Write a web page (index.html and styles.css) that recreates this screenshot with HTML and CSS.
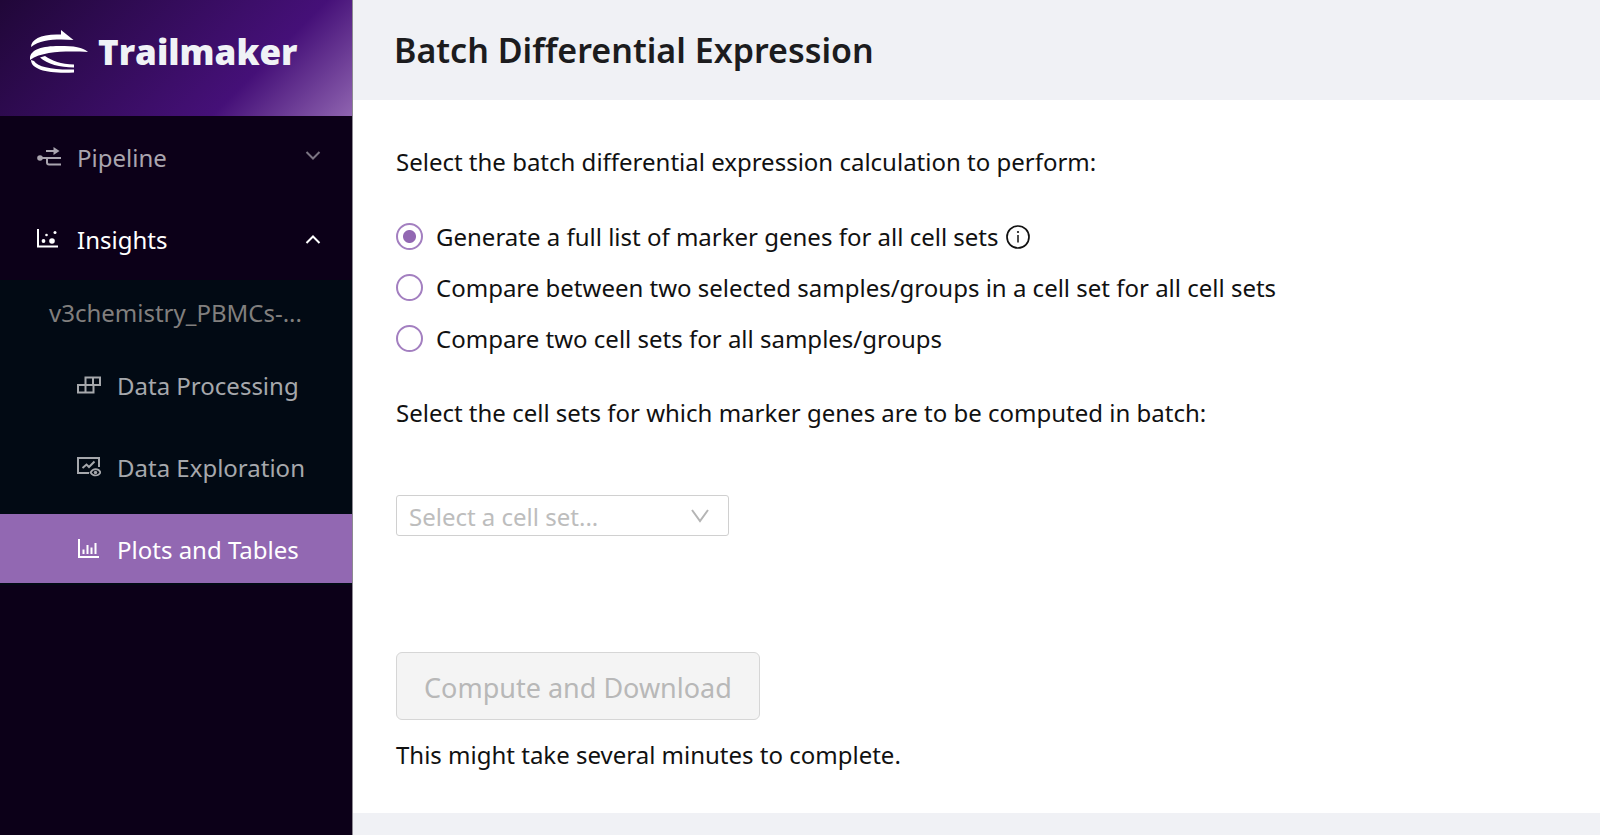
FILE: index.html
```html
<!DOCTYPE html>
<html lang="en">
<head>
<meta charset="utf-8">
<meta name="viewport" content="width=device-width, initial-scale=1">
<title>Batch Differential Expression - Trailmaker</title>
<link rel="stylesheet" href="styles.css">
</head>
<body>
<div class="app">
  <aside class="sidebar">
    <a class="brand" href="#">
      <svg class="brand-mark" viewBox="0 0 58 44" width="58" height="44" aria-hidden="true">
        <path d="M1 17C1 9 12 3.500 31 4.500V0L43.500 10C28 9 11 9 1 17Z"/>
        <path d="M0 30C-1 20 11 16 29 16C45 16 52 17 58 22C42 21.500 14 20 0 30Z"/>
        <path d="M10 27.500L15 26C22 31 31 34 44 34.500V37.500C30 37.500 17 34 10 27.500Z"/>
        <path d="M1 30L4 31C8 37 22 40 44 39.500V42.500C20 44 1 40 1 30Z"/>
      </svg>
      <span class="brand-name">Trailmaker</span>
    </a>
    <nav class="menu" aria-label="Main">
      <button class="item" type="button" aria-expanded="false">
        <svg class="icon" viewBox="0 0 24 24" width="24" height="24" aria-hidden="true">
          <path d="M2 12H24M9 5H18M10 12V16.500Q10 18.500 12 18.500H24" fill="none" stroke="currentColor" stroke-width="2"/>
          <path d="M16.500 1L22.500 5 16.500 9Z"/><circle cx="3" cy="12" r="2.800"/>
        </svg>
        <span class="label">Pipeline</span>
        <svg class="arrow" viewBox="0 0 16 16" width="16" height="16" aria-hidden="true"><path d="M1.500 2L8 8.500 14.500 2"/></svg>
      </button>
      <button class="item open" type="button" aria-expanded="true">
        <svg class="icon" viewBox="0 0 24 24" width="24" height="24" aria-hidden="true">
          <path d="M1 1V18.500H21" fill="none" stroke="currentColor" stroke-width="2"/>
          <circle cx="6.500" cy="13" r="1.900"/><circle cx="9.500" cy="7" r="1.300"/><circle cx="15" cy="13" r="2.800"/><circle cx="18" cy="4.500" r="1.500"/>
        </svg>
        <span class="label">Insights</span>
        <svg class="arrow" viewBox="0 0 16 16" width="16" height="16" aria-hidden="true"><path d="M1.500 11L8 4.500 14.500 11"/></svg>
      </button>
      <div class="submenu">
        <div class="group-title">v3chemistry_PBMCs-...</div>
        <a class="item" href="#">
          <svg class="icon" viewBox="0 0 24 24" width="24" height="24" aria-hidden="true">
            <path d="M1 11H16.500V18.500H1ZM8.500 3.500H23V11H8.500ZM8.500 11V18.500M16 3.500V11" fill="none" stroke="currentColor" stroke-width="2"/>
          </svg>
          <span class="label">Data Processing</span>
        </a>
        <a class="item" href="#">
          <svg class="icon" viewBox="0 0 24 24" width="24" height="24" aria-hidden="true">
            <path d="M12 17H1V2H22V11M5.500 12L9.500 8.500 12 11 17.500 5.500" fill="none" stroke="currentColor" stroke-width="2"/>
            <path d="M13.500 16.500C16 12 21.500 12 23.500 16.500C21.500 20.500 16 20.500 13.500 16.500Z" fill="none" stroke="currentColor" stroke-width="1.700"/><circle cx="18.500" cy="16.500" r="1.700"/>
          </svg>
          <span class="label">Data Exploration</span>
        </a>
        <a class="item selected" href="#" aria-current="page">
          <svg class="icon" viewBox="0 0 24 24" width="24" height="24" aria-hidden="true">
            <path d="M2 1V19H22M6.500 16V11.500M10.500 16V7M14.500 16V9.500M18.500 16V5" fill="none" stroke="currentColor" stroke-width="2"/>
          </svg>
          <span class="label">Plots and Tables</span>
        </a>
      </div>
    </nav>
  </aside>
  <main class="main">
    <header class="page-head"><h1>Batch Differential Expression</h1></header>
    <form class="panel">
      <fieldset class="choices">
        <legend>Select the batch differential expression calculation to perform:</legend>
        <label class="choice"><input type="radio" name="calc" checked><span>Generate a full list of marker genes for all cell sets</span>
          <svg class="info" viewBox="0 0 24 24" width="24" height="24" aria-hidden="true"><circle cx="12" cy="12" r="11" fill="none" stroke="currentColor" stroke-width="1.700"/><path d="M12 10V17.500" fill="none" stroke="currentColor" stroke-width="1.500"/><circle cx="12" cy="7" r="1.100"/></svg>
        </label>
        <label class="choice"><input type="radio" name="calc"><span>Compare between two selected samples/groups in a cell set for all cell sets</span></label>
        <label class="choice"><input type="radio" name="calc"><span>Compare two cell sets for all samples/groups</span></label>
      </fieldset>
      <label class="prompt" for="cellset">Select the cell sets for which marker genes are to be computed in batch:</label>
      <div class="select">
        <select id="cellset"><option>Select a cell set...</option></select>
        <svg class="caret" viewBox="0 0 18 14" width="18" height="14" aria-hidden="true"><path d="M1 1L9 12 17 1"/></svg>
      </div>
      <button class="compute" type="button" disabled>Compute and Download</button>
      <p class="note">This might take several minutes to complete.</p>
    </form>
  </main>
</div>
</body>
</html>
```
FILE: styles.css
```css
* { box-sizing: border-box; }
body {
  margin: 0;
  font-family: "Noto Sans", "Open Sans", sans-serif;
  font-size: 24px;
  line-height: 36px;
  color: #111;
  background: #f0f1f5;
}
button, select { font: inherit; }
svg { fill: currentColor; flex: none; }

.app { display: flex; min-height: 100vh; }

.sidebar {
  flex: none;
  width: 353px;
  background: #0c0018;
  border-right: 1px solid #8d8a92;
}
.brand {
  display: flex;
  align-items: center;
  gap: 10px;
  height: 116px;
  padding: 0 30px 12px;
  color: #f0f2f6;
  text-decoration: none;
  background: linear-gradient(135deg, #200738 0%, #451078 70%, #8f64b0 100%);
}
.brand-mark { fill: #fff; }
.brand-name { font-family: "Open Sans", sans-serif; font-size: 35px; font-weight: 800; }

.menu { padding-top: 6px; }
.item {
  display: flex;
  align-items: center;
  gap: 16px;
  width: 100%;
  height: 69px;
  margin-bottom: 13px;
  padding: 2px 31px 0 37px;
  border: 0;
  background: none;
  color: #aaa5af;
  text-align: left;
  text-decoration: none;
  cursor: pointer;
}
.item .label { flex: 1; }
.item.open { margin-bottom: 7px; color: #fff; }
.arrow { fill: none; stroke: currentColor; stroke-width: 2; opacity: 0.7; }
.open .arrow { opacity: 1; }
.submenu { background: #020a14; padding-bottom: 2px; }
.submenu .item { padding-left: 77px; color: #a6a8ac; }
.submenu .item.selected { margin: 0; background: #9268b2; color: #fff; }
.group-title { padding: 15px 0 19px 49px; color: #817f7e; }

.main { flex: 1; min-width: 0; }
.page-head { padding: 28px 41px; }
h1 { margin: 0; font-size: 34px; line-height: 44px; font-weight: 600; color: #1c1c1e; }

.panel { padding: 44px 43px 40px; background: #fff; }
.choices { margin: 0 0 31px; padding: 0; border: 0; }
legend { margin-bottom: 31px; padding: 0; }
.choice { display: flex; align-items: center; height: 51px; }
.choice input {
  appearance: none;
  flex: none;
  width: 27px;
  height: 27px;
  margin: 0 13px 0 0;
  border: 2px solid #a37fc0;
  border-radius: 50%;
}
.choice input:checked { background: radial-gradient(circle, #9268b2 0 6px, transparent 7px); }
.info { margin-left: 7px; }
.prompt { display: block; }

.select { position: relative; width: 333px; margin-top: 64px; }
.select select {
  display: block;
  appearance: none;
  width: 100%;
  height: 41px;
  padding: 2px 48px 0 12px;
  border: 1px solid #d0d0d0;
  border-radius: 3px;
  background: #fff;
  color: #bdbdbd;
}
.caret {
  position: absolute;
  top: 14px;
  right: 20px;
  fill: none;
  stroke: #b5b5b5;
  stroke-width: 2;
  pointer-events: none;
}
.compute {
  display: block;
  margin: 116px 0 17px;
  padding: 16px 27px 12px;
  border: 1px solid #d6d6d6;
  border-radius: 6px;
  background: #f4f4f4;
  color: #b8b8b8;
  font-size: 27px;
  line-height: 38px;
}
.note { margin: 0; }
```
